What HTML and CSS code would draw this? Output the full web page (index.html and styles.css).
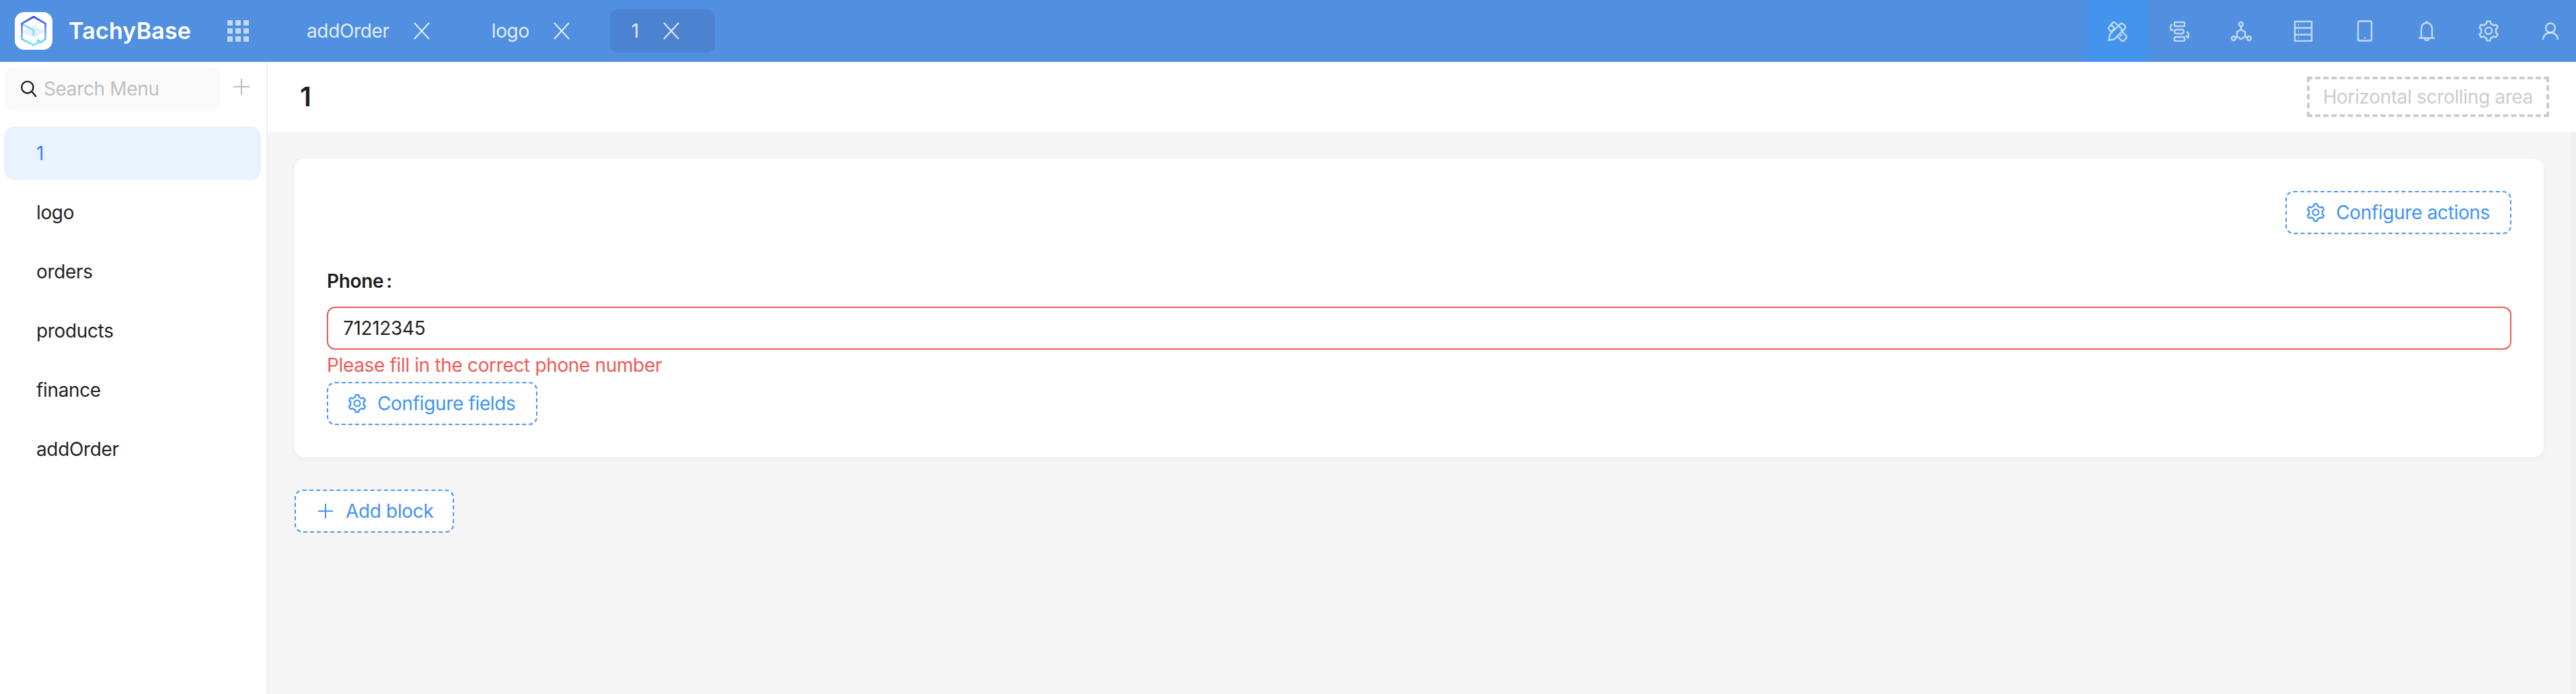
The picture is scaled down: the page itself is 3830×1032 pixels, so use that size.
FILE: index.html

```html
<!DOCTYPE html>
<html lang="en">
<head>
  <meta charset="UTF-8">
  <title>TachyBase</title>
  <link rel="stylesheet" href="styles.css">
</head>
<body>
  <svg class="defs" width="0" height="0">
    <symbol id="gear" viewBox="0 0 1024 1024">
      <path fill="currentColor" d="M924.8 625.7l-65.5-56c3.1-19 4.7-38.4 4.7-57.8s-1.6-38.8-4.7-57.8l65.5-56a32.03 32.03 0 0 0 9.3-35.2l-.9-2.6a443.74 443.74 0 0 0-79.7-137.9l-1.8-2.1a32.12 32.12 0 0 0-35.1-9.5l-81.3 28.9c-30-24.6-63.5-44-99.7-57.6l-15.7-85a32.05 32.05 0 0 0-25.8-25.7l-2.7-.5c-52.1-9.4-106.9-9.4-159 0l-2.7.5a32.05 32.05 0 0 0-25.8 25.7l-15.8 85.4a351.86 351.86 0 0 0-99 57.4l-81.9-29.1a32 32 0 0 0-35.1 9.5l-1.8 2.1a446.02 446.02 0 0 0-79.7 137.9l-.9 2.6c-4.5 12.5-.8 26.5 9.3 35.2l66.3 56.6c-3.1 18.8-4.6 38-4.6 57.1 0 19.2 1.5 38.4 4.6 57.1L99 625.5a32.03 32.03 0 0 0-9.3 35.2l.9 2.6c18.1 50.4 44.9 96.9 79.7 137.9l1.8 2.1a32.12 32.12 0 0 0 35.1 9.5l81.9-29.1c29.8 24.5 63.1 43.9 99 57.4l15.8 85.4a32.05 32.05 0 0 0 25.8 25.7l2.7.5a449.4 449.4 0 0 0 159 0l2.7-.5a32.05 32.05 0 0 0 25.8-25.7l15.7-85a350 350 0 0 0 99.7-57.6l81.3 28.9a32 32 0 0 0 35.1-9.5l1.8-2.1c34.8-41.1 61.6-87.5 79.7-137.9l.9-2.6c4.5-12.3.8-26.3-9.3-35zM788.3 465.9c2.5 15.1 3.8 30.6 3.8 46.1s-1.3 31-3.8 46.1l-6.6 40.1 74.7 63.9a370.03 370.03 0 0 1-42.6 73.6L721 702.8l-31.4 25.8c-23.9 19.6-50.5 35-79.3 45.8l-38.1 14.3-17.9 97a377.5 377.5 0 0 1-85 0l-17.9-97.2-37.8-14.5c-28.5-10.8-55-26.2-78.7-45.7l-31.4-25.9-93.4 33.2c-17-22.9-31.2-47.6-42.6-73.6l75.5-64.5-6.5-40c-2.4-14.9-3.7-30.3-3.7-45.5 0-15.3 1.2-30.6 3.7-45.5l6.5-40-75.5-64.5c11.3-26.1 25.6-50.7 42.6-73.6l93.4 33.2 31.4-25.9c23.7-19.5 50.2-34.9 78.7-45.7l37.9-14.3 17.9-97.2c28.1-3.2 56.8-3.2 85 0l17.9 97 38.1 14.3c28.7 10.8 55.4 26.2 79.3 45.8l31.4 25.8 92.8-32.9c17 22.9 31.2 47.6 42.6 73.6L781.8 426l6.5 39.9zM512 326c-97.2 0-176 78.8-176 176s78.8 176 176 176 176-78.8 176-176-78.8-176-176-176zm79.2 255.2A111.6 111.6 0 0 1 512 614c-29.9 0-58-11.7-79.2-32.8A111.6 111.6 0 0 1 400 502c0-29.9 11.7-58 32.8-79.2C454 401.6 482.1 390 512 390c29.9 0 58 11.6 79.2 32.8A111.6 111.6 0 0 1 624 502c0 29.9-11.7 58-32.8 79.2z"/>
    </symbol>
    <symbol id="cross" viewBox="0 0 26 26">
      <path d="M2 1l22 24M24 1L2 25" fill="none" stroke="currentColor" stroke-width="2"/>
    </symbol>
  </svg>

  <header class="topbar">
    <div class="logo">
      <svg viewBox="0 0 56 56" width="56" height="56">
        <defs>
          <linearGradient id="hexGrad" x1="0" y1="0" x2="0" y2="1">
            <stop offset="0" stop-color="#2f4fe0"/>
            <stop offset="0.45" stop-color="#7f9cf5"/>
            <stop offset="1" stop-color="#7fe6fb"/>
          </linearGradient>
        </defs>
        <path d="M10 29l18-10 18 10-18 10z" fill="#e3f2fd"/>
        <path d="M11 18l17 9v8" fill="none" stroke="#8fdcf8" stroke-width="3"/>
        <path d="M33 41l6 4 6.500-5V17L28 7 10.500 17v23L28 49l9-5" fill="none" stroke="url(#hexGrad)" stroke-width="3"/>
      </svg>
    </div>
    <span class="brand">TachyBase</span>
    <svg class="apps" viewBox="0 0 32 32" width="32" height="32">
      <path fill="#fff" fill-opacity=".65" d="M0 0h8v8H0zM12 0h8v8h-8zM24 0h8v8h-8zM0 12h8v8H0zM12 12h8v8h-8zM24 12h8v8h-8zM0 24h8v8H0zM12 24h8v8h-8zM24 24h8v8h-8z"/>
    </svg>
    <nav class="tabs">
      <a class="tab">addOrder<svg class="tab-close"><use href="#cross"/></svg></a>
      <a class="tab">logo<svg class="tab-close"><use href="#cross"/></svg></a>
      <a class="tab active">1<svg class="tab-close"><use href="#cross"/></svg></a>
    </nav>
    <div class="actions">
      <a class="action active">
        <svg viewBox="0 0 32 32"><path d="M3.500 30l1.500-9L20 6a3.500 3.500 0 0 1 5 0l2 2a3.500 3.500 0 0 1 0 5L12 28zM18 8l6 7M12 12L6.500 6.500M12 12l-5 5-3-3a3 3 0 0 1 0-4l5-6a3 3 0 0 1 4 0l5 5M21 15l8 8a3 3 0 0 1 0 4l-3 3a3 3 0 0 1-4 0l-7-7M20 24l3-3"/></svg>
      </a>
      <a class="action">
        <svg viewBox="0 0 32 32"><rect x="9" y="3" width="15" height="6" rx="1"/><rect x="9" y="14" width="14" height="6" rx="3"/><rect x="9" y="25" width="15" height="6" rx="1"/><path d="M6 6c-3 1.500-4 5-2 9M3 12l1 3 3-1M27 17c3 1.500 3.500 5 2 9M26 23l3 3 1-3"/></svg>
      </a>
      <a class="action">
        <svg viewBox="0 0 32 32"><circle cx="16" cy="6" r="3"/><circle cx="5" cy="27" r="3"/><circle cx="28" cy="27" r="3"/><path d="M16 9v5M16 14l6 3.500v7L16 28l-6-3.500v-7zM8 26l2-1.500M25 26l-3-1.500"/></svg>
      </a>
      <a class="action">
        <svg viewBox="0 0 32 32"><path d="M4 2h25v29H4zM4 11.500h25M4 21.500h25M9 7h1M9 16.500h1M9 26h1"/></svg>
      </a>
      <a class="action">
        <svg viewBox="0 0 32 32"><rect x="6" y="1.500" width="20" height="29" rx="2"/><path d="M16 25.500v2"/></svg>
      </a>
      <a class="action">
        <svg viewBox="0 0 32 32"><path d="M16 1v3M8 26V13c0-5 3-9 8-9s8 4 8 9v13M4 26.500h24M13 27c0 4 6 4 6 0"/></svg>
      </a>
      <a class="action">
        <svg class="fill-icon" viewBox="0 0 36 36"><use href="#gear"/></svg>
      </a>
      <a class="action">
        <svg viewBox="0 0 32 32"><circle cx="16" cy="11.500" r="7"/><path d="M5 29c0-6 5-10.500 11-10.500s11 4.500 11 10.500"/></svg>
      </a>
    </div>
  </header>

  <div class="layout">
    <aside class="sidebar">
      <div class="search-row">
        <div class="search">
          <svg viewBox="0 0 24 24" width="26" height="26"><circle cx="10" cy="10" r="8" fill="none" stroke="#1f1f1f" stroke-width="2.200"/><path d="M16 16l6 7" stroke="#1f1f1f" stroke-width="2.200"/></svg>
          <input type="text" placeholder="Search Menu">
        </div>
        <svg class="add-menu" viewBox="0 0 24 24" width="24" height="24"><path d="M12 0v24M0 12h24" stroke="#bbb" stroke-width="2"/></svg>
      </div>
      <ul class="menu">
        <li class="menu-item active">1</li>
        <li class="menu-item">logo</li>
        <li class="menu-item">orders</li>
        <li class="menu-item">products</li>
        <li class="menu-item">finance</li>
        <li class="menu-item">addOrder</li>
      </ul>
    </aside>

    <main class="main">
      <div class="page-header">
        <h1>1</h1>
        <div class="scroll-area">Horizontal scrolling area</div>
      </div>
      <div class="page-body">
        <div class="content">
          <section class="card">
            <div class="card-actions">
              <button class="dashed-btn"><svg class="btn-icon"><use href="#gear"/></svg>Configure actions</button>
            </div>
            <label class="field-label" for="phone">Phone<span class="colon">:</span></label>
            <input class="field-input" id="phone" type="text" value="71212345">
            <div class="field-error">Please fill in the correct phone number</div>
            <button class="dashed-btn"><svg class="btn-icon"><use href="#gear"/></svg>Configure fields</button>
          </section>
          <button class="dashed-btn add-block">
            <svg class="btn-icon" viewBox="0 0 28 28"><path d="M14 3v22M3 14h22" stroke="currentColor" stroke-width="2"/></svg>Add block
          </button>
        </div>
        <div class="scrollbar"></div>
      </div>
    </main>
  </div>
</body>
</html>
```

FILE: styles.css

```css
* {
  box-sizing: border-box;
}
html, body {
  height: 100%;
}
body {
  margin: 0;
  overflow: hidden;
  font-family: Inter, "Noto Sans", sans-serif;
  font-size: 28px;
  line-height: 44px;
  letter-spacing: -0.35px;
  color: #1f1f1f;
  background: #fff;
}
.defs {
  position: absolute;
}

/* top bar */
.topbar {
  display: flex;
  align-items: center;
  height: 92px;
  padding-left: 22px;
  background: #5190e1;
  overflow: hidden;
}
.logo {
  width: 56px;
  height: 56px;
  border-radius: 14px;
  background: #fff;
}
.logo svg {
  display: block;
}
.brand {
  margin-left: 24px;
  width: 182px;
  color: #fff;
  font-size: 34px;
  font-weight: 600;
  letter-spacing: 0.2px;
  white-space: nowrap;
}
.apps {
  margin-left: 54px;
}
.tabs {
  display: flex;
  gap: 7px;
  margin-left: 54px;
}
.tab {
  display: flex;
  align-items: center;
  gap: 35px;
  height: 64px;
  padding: 0 52px 0 32px;
  border-radius: 12px;
  color: rgba(255, 255, 255, 0.85);
}
.tab.active {
  background: #4c83d1;
}
.tab-close {
  width: 26px;
  height: 26px;
}
.actions {
  display: flex;
  margin-left: auto;
  margin-right: -8px;
}
.action {
  display: flex;
  align-items: center;
  justify-content: center;
  width: 92px;
  height: 92px;
  color: rgba(255, 255, 255, 0.65);
}
.action.active {
  background: #4494ed;
}
.action svg {
  width: 32px;
  height: 32px;
  fill: none;
  stroke: currentColor;
  stroke-width: 2.400;
}
.action svg.fill-icon {
  width: 36px;
  height: 36px;
  stroke: none;
}

/* sidebar */
.layout {
  display: flex;
  height: 940px;
}
.sidebar {
  flex: none;
  width: 398px;
  border-right: 2px solid #f0f0f0;
  padding-top: 8px;
}
.search-row {
  display: flex;
  align-items: flex-start;
  padding-left: 7px;
}
.search {
  display: flex;
  align-items: center;
  gap: 9px;
  width: 321px;
  height: 64px;
  padding-left: 23px;
  border-radius: 12px;
  background: #fafafa;
}
.search input {
  width: 240px;
  padding: 0;
  border: none;
  outline: none;
  background: transparent;
  font: inherit;
  letter-spacing: inherit;
}
.search input::placeholder {
  color: #bfbfbf;
}
.add-menu {
  margin: 17px 0 0 19px;
}
.menu {
  list-style: none;
  margin: 24px 0 0;
  padding: 0 8px 0 6px;
}
.menu-item {
  height: 80px;
  margin-bottom: 8px;
  padding-left: 48px;
  border-radius: 16px;
  line-height: 81px;
}
.menu-item.active {
  background: #e8f3fe;
  color: #3b7ff5;
}

/* page */
.main {
  flex: 1;
  display: flex;
  flex-direction: column;
  min-width: 0;
}
.page-header {
  display: flex;
  align-items: center;
  justify-content: space-between;
  flex: none;
  height: 104px;
  padding: 0 40px 0 48px;
}
.page-header h1 {
  margin: 0;
  font-size: 40px;
  font-weight: 600;
}
.scroll-area {
  height: 60px;
  padding: 0 20px;
  border: 4px dashed #ccc;
  color: #ccc;
  line-height: 52px;
  white-space: nowrap;
}
.page-body {
  flex: 1;
  display: flex;
  background: #f5f5f5;
}
.content {
  flex: 1;
  padding: 40px 40px 0;
}
.scrollbar {
  flex: none;
  width: 8px;
  background: #efefef;
}
.card {
  padding: 48px;
  border-radius: 16px;
  background: #fff;
  box-shadow: 0 2px 8px rgba(0, 0, 0, 0.03);
}
.card-actions {
  display: flex;
  justify-content: flex-end;
  margin-bottom: 48px;
}
.field-label {
  display: block;
  margin-bottom: 16px;
  font-weight: 600;
}
.colon {
  margin-left: 4px;
}
.field-input {
  display: block;
  width: 100%;
  height: 64px;
  padding: 0 22px;
  border: 2px solid #ee5a55;
  border-radius: 12px;
  outline: none;
  background: #fff;
  color: #1f1f1f;
  font: inherit;
  letter-spacing: inherit;
}
.field-error {
  height: 48px;
  padding-top: 1px;
  color: #ee5a55;
}
.dashed-btn {
  display: inline-flex;
  align-items: center;
  gap: 14px;
  height: 64px;
  padding: 0 30px 0 27px;
  border: 2px dashed #4a96f0;
  border-radius: 12px;
  background: #fff;
  box-shadow: 0 2px 0 rgba(0, 0, 0, 0.02);
  color: #4093f3;
  font: inherit;
  letter-spacing: inherit;
}
.btn-icon {
  flex: none;
  width: 32px;
  height: 32px;
}
.add-block {
  gap: 16px;
  margin-top: 48px;
  padding: 0 29px 0 30px;
}
.add-block .btn-icon {
  width: 28px;
  height: 28px;
}
```
